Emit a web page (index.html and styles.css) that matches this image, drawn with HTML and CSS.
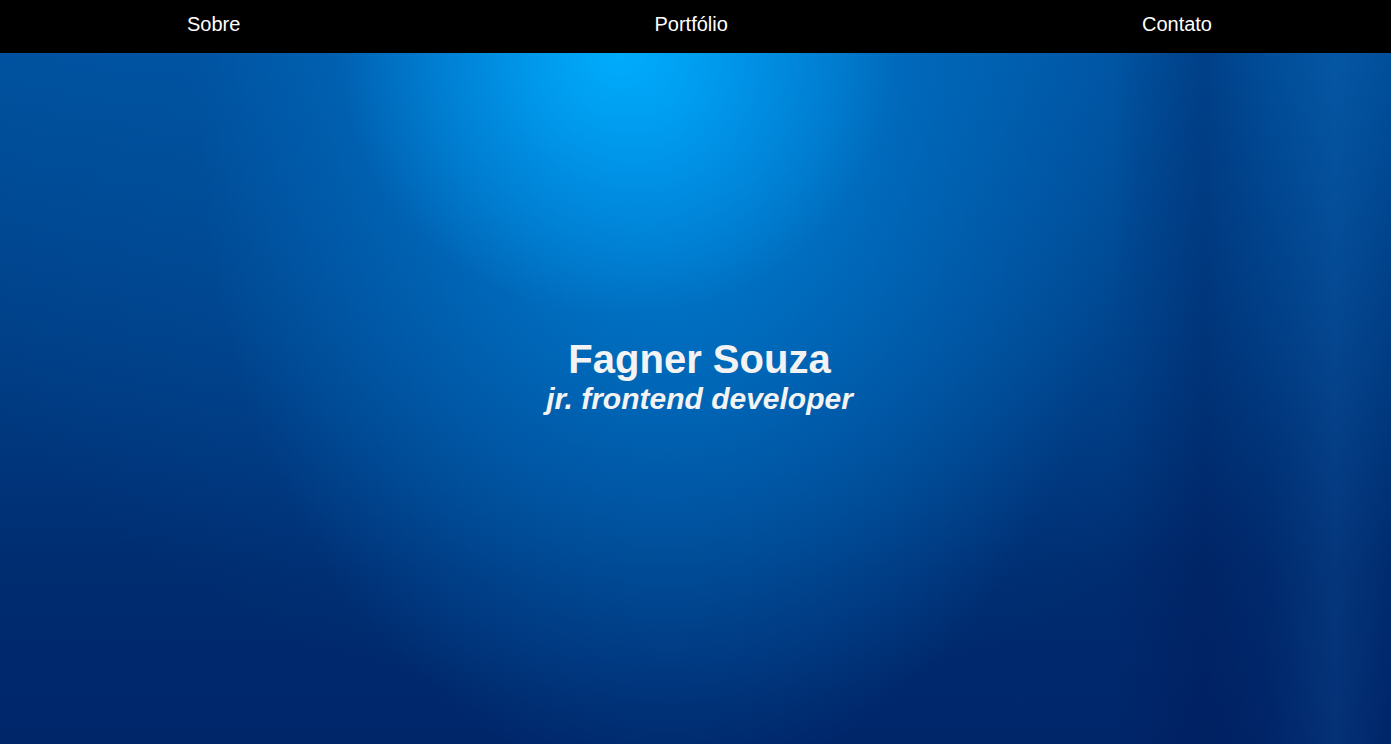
FILE: index.html
```html
<!DOCTYPE html>
<html lang="pt-BR">
<head>
<meta charset="utf-8">
<title>Fagner Souza</title>
<link rel="stylesheet" href="styles.css">
</head>
<body>
<nav class="nav">
  <a class="nav-link" href="#sobre">Sobre</a>
  <a class="nav-link" href="#portfolio">Portfólio</a>
  <a class="nav-link" href="#contato">Contato</a>
</nav>
<main class="hero">
  <div class="hero-text">
    <h1 class="hero-title">Fagner Souza</h1>
    <p class="hero-subtitle">jr. frontend developer</p>
  </div>
</main>
</body>
</html>
```
FILE: styles.css
```css
* { box-sizing: border-box; }
html, body { margin: 0; padding: 0; }
body {
  font-family: "Liberation Sans", Arial, sans-serif;
  background: #002466;
  overflow: hidden;
}
.nav {
  display: flex;
  justify-content: space-between;
  align-items: flex-start;
  height: 53px;
  padding: 13px 179px 0 187px;
  background: #000;
}
.nav-link {
  color: #fff;
  text-decoration: none;
  font-size: 20px;
  line-height: 23px;
}
.hero {
  height: 691px;
  display: flex;
  align-items: center;
  justify-content: center;
  padding: 0 0 45px 8px;
  background:
    linear-gradient(180deg, rgba(0,0,0,0) 0%, rgba(0,0,0,0) 100%),
    linear-gradient(90deg,
      rgba(0,20,80,0) 0%,
      rgba(0,20,80,0) 80%,
      rgba(0,20,80,0.3) 86.5%,
      rgba(0,20,80,0.1) 91%,
      rgba(30,110,190,0.15) 96%,
      rgba(0,20,80,0.05) 100%),
    radial-gradient(ellipse 20% 38% at 44.5% 0%, rgba(0,175,255,0.95) 0%, rgba(0,165,250,0.5) 50%, rgba(0,150,240,0) 100%),
    radial-gradient(ellipse 34% 100% at 48% 6%, rgba(0,135,220,0.9) 0%, rgba(0,120,205,0.5) 55%, rgba(0,100,190,0) 100%),
    radial-gradient(ellipse 55% 85% at 47% 10%, rgba(0,90,170,0.6) 0%, rgba(0,80,160,0) 100%),
    linear-gradient(180deg, #00529f 0%, #004088 40%, #002c70 75%, #00266a 100%);
}
.hero-text {
  text-align: center;
  color: #f3f3f3;
}
.hero-title {
  margin: 0;
  font-size: 40px;
  font-weight: bold;
  line-height: normal;
}
.hero-subtitle {
  margin: 0;
  font-size: 30px;
  font-weight: bold;
  font-style: italic;
  line-height: normal;
}
```
